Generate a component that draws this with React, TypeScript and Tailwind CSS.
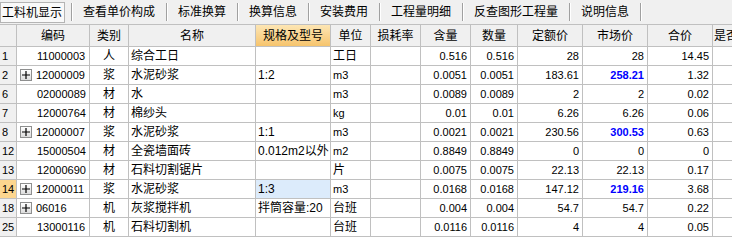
import React from 'react';

const FONT = '"Liberation Sans", "Noto Sans CJK SC", sans-serif';

const tabs = ['查看单价构成', '标准换算', '换算信息', '安装费用', '工程量明细', '反查图形工程量', '说明信息'];

interface Col {
  title: string;
  width: number;
  align: 'left' | 'right' | 'center';
}

const cols: Col[] = [
  { title: '', width: 17, align: 'left' },
  { title: '编码', width: 73, align: 'left' },
  { title: '类别', width: 39, align: 'center' },
  { title: '名称', width: 127, align: 'left' },
  { title: '规格及型号', width: 75, align: 'left' },
  { title: '单位', width: 40, align: 'left' },
  { title: '损耗率', width: 50, align: 'right' },
  { title: '含量', width: 50, align: 'right' },
  { title: '数量', width: 47, align: 'right' },
  { title: '定额价', width: 65, align: 'right' },
  { title: '市场价', width: 65, align: 'right' },
  { title: '合价', width: 65, align: 'right' },
  { title: '是否暂估', width: 60, align: 'left' },
];

interface Row {
  no: string;
  expand?: boolean;
  cells: string[];
  blue?: boolean;
  selected?: boolean;
}

const rows: Row[] = [
  { no: '1', cells: ['11000003', '人', '综合工日', '', '工日', '', '0.516', '0.516', '28', '28', '14.45'] },
  { no: '2', expand: true, blue: true, cells: ['12000009', '浆', '水泥砂浆', '1:2', 'm3', '', '0.0051', '0.0051', '183.61', '258.21', '1.32'] },
  { no: '6', cells: ['02000089', '材', '水', '', 'm3', '', '0.0089', '0.0089', '2', '2', '0.02'] },
  { no: '7', cells: ['12000764', '材', '棉纱头', '', 'kg', '', '0.01', '0.01', '6.26', '6.26', '0.06'] },
  { no: '8', expand: true, blue: true, cells: ['12000007', '浆', '水泥砂浆', '1:1', 'm3', '', '0.0021', '0.0021', '230.56', '300.53', '0.63'] },
  { no: '12', cells: ['15000504', '材', '全瓷墙面砖', '0.012m2以外', 'm2', '', '0.8849', '0.8849', '0', '0', '0'] },
  { no: '13', cells: ['12000690', '材', '石料切割锯片', '', '片', '', '0.0075', '0.0075', '22.13', '22.13', '0.17'] },
  { no: '14', expand: true, blue: true, selected: true, cells: ['12000011', '浆', '水泥砂浆', '1:3', 'm3', '', '0.0168', '0.0168', '147.12', '219.16', '3.68'] },
  { no: '18', expand: true, cells: ['06016', '机', '灰浆搅拌机', '拌筒容量:20', '台班', '', '0.004', '0.004', '54.7', '54.7', '0.22'] },
  { no: '25', cells: ['13000116', '机', '石料切割机', '', '台班', '', '0.0116', '0.0116', '4', '4', '0.05'] },
];

const alignClass = (a: Col['align']) =>
  a === 'right' ? 'justify-end pr-[3px]' : a === 'center' ? 'justify-center' : 'justify-start pl-[2px]';

// little "+" expander box in front of the code
const PlusBox = () => (
  <span className="inline-flex items-center justify-center w-[12px] h-[12px] border border-[#8e8f8f] bg-gradient-to-b from-white to-[#dcdcdc] ml-[1px] mr-[4px] shrink-0">
    <svg width="8" height="8" viewBox="0 0 8 8">
      <path d="M0 4h8M4 0v8" stroke="#000" strokeWidth="1.2" />
    </svg>
  </span>
);

export default function App() {
  return (
    <div className="w-[732px] h-[249px] bg-white overflow-hidden text-black" style={{ fontFamily: FONT }}>
      {/* Tab strip */}
      <div className="h-[24px] bg-[#f0f0f0] flex items-center text-[12px]">
        <div className="h-[21px] w-[65px] mt-[1px] border border-[#b4b4b4] bg-[#f9f9f9] flex items-center pl-[1px]">
          工料机显示
        </div>
        <div className="ml-[6px] w-[1px] h-[18px] bg-[#a0a0a0] shadow-[1px_0_0_#ffffff]" />
        {tabs.map((t) => (
          <React.Fragment key={t}>
            <span className="px-[11px] whitespace-nowrap leading-[24px]">{t}</span>
            <div className="w-[1px] h-[18px] bg-[#a0a0a0] shadow-[1px_0_0_#ffffff]" />
          </React.Fragment>
        ))}
      </div>

      {/* Grid header */}
      <div className="flex h-[23px] border-t border-b border-[#c0c0c0] bg-[#f0f0f0] text-[12px] whitespace-nowrap">
        {cols.map((c, i) => (
          <div
            key={i}
            className={`shrink-0 h-full border-r border-[#c0c0c0] flex items-center overflow-hidden ${
              i === 12 ? 'justify-start pl-[1px]' : 'justify-center'
            } ${i === 4 ? 'bg-gradient-to-b from-[#fde6b4] to-[#f6c46c]' : ''}`}
            style={{ width: c.width }}
          >
            {c.title}
          </div>
        ))}
      </div>

      {/* Rows */}
      {rows.map((r) => (
        <div key={r.no} className="flex h-[19px] border-b border-[#c0c0c0] text-[12px] whitespace-nowrap">
          <div
            className={`shrink-0 h-full border-r border-[#c0c0c0] flex items-center pl-[2px] text-[11px] ${
              r.selected ? 'bg-[#fcd68f]' : 'bg-[#f0f0f0]'
            }`}
            style={{ width: cols[0].width }}
          >
            {r.no}
          </div>
          {r.cells.concat(['']).map((v, j) => {
            const col = cols[j + 1];
            const numeric = /^[0-9a-z.:]/.test(v) && j !== 3;
            const isBlue = r.blue && j === 9;
            return (
              <div
                key={j}
                className={`shrink-0 h-full border-r border-[#c0c0c0] flex items-center overflow-hidden ${alignClass(col.align)} ${
                  r.selected && j === 3 ? 'bg-[#dcebfb]' : ''
                } ${numeric ? 'text-[11px]' : ''} ${isBlue ? 'text-[#0000ff] font-bold' : ''}`}
                style={{ width: col.width }}
              >
                {j === 0 && (r.expand ? <PlusBox /> : <span className="w-[18px] shrink-0" />)}
                {v}
              </div>
            );
          })}
        </div>
      ))}
    </div>
  );
}
